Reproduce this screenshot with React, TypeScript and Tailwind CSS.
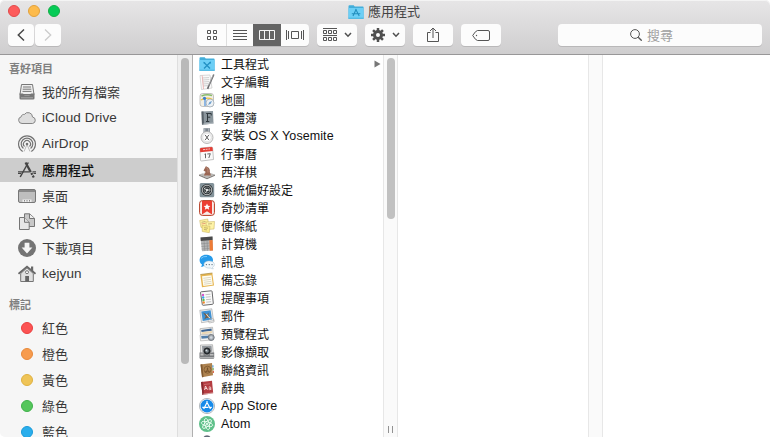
import React from "react";

type Glyph = () => React.ReactElement;

// Latin runs are set a little larger than the ideographs beside them.
function Label({ text, latin }: { text: string; latin: string }) {
  return (
    <span className="whitespace-pre pt-px">
      {text.split(/([\x20-\x7e]+)/).map((part, i) =>
        /^[\x20-\x7e]+$/.test(part) ? (
          <span key={i} className={latin}>{part}</span>
        ) : (
          part
        )
      )}
    </span>
  );
}

/* ---------- sidebar icons, 18px grid ---------- */

const AllFiles: Glyph = () => (
  <>
    <path d="M3.5 1.5h11l1.5 10H2z" fill="#eee" stroke="#777" />
    <path d="M5 4h8M4.7 6.2h8.6M4.5 8.4h9" stroke="#777" />
    <path d="M1.5 10.5H5l1.5 1.7h5l1.5-1.7h3.5v4.7q0 1.3-1.3 1.3H2.8q-1.3 0-1.3-1.3z" fill="#777" />
    <path d="M3 14.8h12" stroke="#aaa" />
  </>
);
const Cloud: Glyph = () => (
  <path d="M4 14.5a3.4 3.4 0 0 1-.8-6.7A2.5 2.5 0 0 1 6.3 5.500 4.500 4.500 0 0 1 14.500 8 3.300 3.300 0 0 1 14.600 14.500z" fill="#dedede" stroke="#858585" />
);
const AirDrop: Glyph = () => (
  <g fill="none" stroke="#747474" strokeWidth="1.2">
    <path d="M4.700 16.400a8.400 8.400 0 1 1 8.600 0" />
    <path d="M5.400 13.500a5.800 5.800 0 1 1 7.200 0" />
    <path d="M6.500 11.500a3.500 3.500 0 1 1 5 0" />
    <path d="m9 9.500-3 7M9 9.500l3 7" strokeWidth=".8" stroke="#aaa" />
    <circle cx="9" cy="9" r="1.300" fill="#747474" stroke="none" />
  </g>
);
const Apps: Glyph = () => (
  <g fill="none" stroke="#454545">
    <path d="M10.300 1.500 2.200 16" strokeWidth="1.500" />
    <path d="m7.500 1.500 8.300 15" strokeWidth="2.200" strokeDasharray="11 1 2 1" />
    <path d="M0 10.800h11.500M14.500 10.800H18" strokeWidth="1.300" />
    <path d="M0 12.500h3M15.500 12.500H18" />
  </g>
);
const Desktop: Glyph = () => (
  <>
    <rect x=".5" y="2.500" width="17" height="13" rx="1.500" fill="#bebebe" stroke="#777" />
    <path d="M1 4h16" stroke="#777" strokeWidth="1.500" />
    <path d="M4.500 12.500h9v2.500h-9z" fill="#eee" />
    <path d="M6.500 13v1.500M9 13v1.500M11.500 13v1.500" stroke="#888" />
  </>
);
const Documents: Glyph = () => (
  <>
    <path d="M6.500.8h5.200l4.800 4.500v8.200h-10z" fill="#c8c8c8" stroke="#757575" />
    <path d="M11.500 1v4.500h5" fill="#eee" stroke="#757575" />
    <path d="M1.500 4.500h5l4.700 4.700v7.300H1.500z" fill="#e6e6e6" stroke="#757575" />
    <path d="M6.500 4.500v4.800h4.700" fill="#ddd" stroke="#757575" />
  </>
);
const Downloads: Glyph = () => (
  <>
    <circle cx="9" cy="9" r="9" fill="#747474" />
    <path d="M6.600 3.700h4.800v4.800h3L9 14.500 3.600 8.500h3z" fill="#f6f6f6" />
  </>
);
const Home: Glyph = () => (
  <>
    <path d="M2.700 8.500v8h12.600v-8L9 2.800z" fill="#e0e0e0" stroke="#757575" />
    <path d="M.5 8.800 9 1.500l8.500 7.300" fill="none" stroke="#686868" strokeWidth="1.700" />
    <path d="M13 1.500h2.200v5L13 4.500z" fill="#686868" />
    <circle cx="9" cy="7.200" r="1.500" fill="#fff" stroke="#777" />
    <path d="M7.200 11h3.800v5.500H7.200z" fill="#666" />
  </>
);

/* ---------- application icons, 16px grid ---------- */

const FolderBase = () => (
  <>
    <path d="M.5 2.200q0-.9.9-.9h4.300l1 1.200h8.100q.8 0 .8.800v11.400H.5z" fill="#43aeda" />
    <path d="M.5 4h15v10.700H.5z" fill="#6dcff6" />
    <path d="M.5 14.200h15" stroke="#4cb5de" />
  </>
);
const AppsFolder: Glyph = () => (
  <>
    <FolderBase />
    <path d="M8.300 5 5 12M7.600 5l3.600 7M3.800 9.700h8.500" fill="none" stroke="#238fbe" strokeWidth="1.100" />
  </>
);
const Utilities: Glyph = () => (
  <>
    <FolderBase />
    <path d="m5 6.500 6 6M11 6.500l-6 6" stroke="#2391c4" strokeWidth="1.300" />
    <path d="m4.300 5.800 2 .6-1.400 1.400zM10.300 6l1.400-.4.400 1.600-1.200.6z" fill="#2391c4" />
  </>
);
const TextEdit: Glyph = () => (
  <>
    <path d="m1 1.500 10-.5 2 13-10.500 1.500z" fill="#fafafa" stroke="#c8c8c8" strokeWidth=".7" />
    <path d="m3 4 7-.4M3.300 6l7-.4M3.500 8l6.500-.4M3.700 10l6-.4M4 12l5-.4" stroke="#bbb" strokeWidth=".7" />
    <path d="M3.200 1.500 4.500 15" stroke="#eaa0a0" strokeWidth=".7" />
    <path d="M14.800.5 9.500 12.500l-.9 2.400" stroke="#68696c" strokeWidth="1.600" fill="none" />
    <path d="M14.200.8 9.600 11.500" stroke="#d4d4d4" strokeWidth=".5" />
  </>
);
const Maps: Glyph = () => (
  <>
    <rect x="1" y="1.500" width="13.500" height="13" rx="2.500" fill="#f2efe5" stroke="#aaa" strokeWidth=".7" />
    <path d="M2.500 4q5-2 10.500-.5" stroke="#87b96b" strokeWidth="1.500" fill="none" />
    <path d="M2 8q6-3.500 11.500-.5" stroke="#f0c33c" strokeWidth="1.300" fill="none" />
    <path d="M6 7v7" stroke="#6da5e3" strokeWidth="1.500" />
    <circle cx="5.500" cy="6.300" r="1.600" fill="#3b7dc9" />
    <circle cx="11" cy="11" r="4" fill="#edf1f4" stroke="#a2acb5" strokeWidth=".8" />
    <path d="m9 13 1.500-3L13 9l-1.300 2.700z" fill="#6d9fce" />
  </>
);
const FontBook: Glyph = () => (
  <>
    <path d="m2.500 1.500 11.500-.5.500 12.500L3 15z" fill="#8a959c" />
    <path d="m2.500 1.500 2-.1.500 13.400-2 .2z" fill="#586168" />
    <path d="m3.500 14.300 11-1.300" stroke="#b8bfc4" />
    <path d="M7.200 3.500h5v2M8.500 3.500v8M7 11.500h3.300M8.500 7.200h2.800" stroke="#2e373c" fill="none" />
  </>
);
const Installer: Glyph = () => (
  <>
    <path d="M4.500.2h6.500v5H4.500z" fill="#7d8790" />
    <path d="M5.800.5v4M9.800 .5v4" stroke="#bfc5ca" />
    <circle cx="8" cy="9.500" r="6" fill="#efefef" stroke="#a8a8a8" strokeWidth=".8" />
    <circle cx="8" cy="9.500" r="4.200" fill="#fff" stroke="#ccc" strokeWidth=".5" />
    <path d="m6.200 7 3.600 5M9.800 7l-3.600 5" stroke="#4d4d4d" strokeWidth=".9" />
  </>
);
const Calendar: Glyph = () => (
  <>
    <path d="M1 3q0-1 1-1l10.500-1q1 0 1.100 1L14.500 13.500 2.500 15q-1 0-1-1z" fill="#fafafa" stroke="#aaa" strokeWidth=".7" />
    <path d="M1 3q0-1 1-1l10.500-1q1 0 1.100 1l.2 3L1.200 6.200z" fill="#e33e35" />
    <path d="m4 3.700 7-.8" stroke="#fff" strokeWidth=".7" strokeDasharray="2 .7" />
    <path d="m5.500 8.300 1-.5v4.400M8.300 8l3-.3-1.500 4.300" stroke="#555" strokeWidth=".9" fill="none" />
  </>
);
const Chess: Glyph = () => (
  <>
    <path d="M0 10.500 8 8l8 2.500L8 14z" fill="#b8b7b4" />
    <path d="m3.500 9.700 3-1 4.500 1.500-3 1.200z" fill="#eee" />
    <path d="m0 10.500 8 3.500 8-3.500v1.200L8 15.200l-8-3.500z" fill="#827e7a" />
    <path d="M5 11.500q0-2 1.800-3.500L4.500 6.500 7 2l.8.7Q11.500 4 10.800 8l1.200 3.500z" fill="#9b6754" />
    <path d="M7.500 3.500Q9.500 5 9 8.500" stroke="#c69682" strokeWidth=".8" fill="none" />
  </>
);
const Preferences: Glyph = () => (
  <>
    <rect x=".7" y=".9" width="14.500" height="14.300" rx="1.500" fill="#84939a" />
    <circle cx="8" cy="8" r="6" fill="#2e3336" />
    <circle cx="8" cy="8" r="4.800" fill="none" stroke="#d0d4d4" strokeWidth=".9" />
    <circle cx="8" cy="8" r="3" fill="none" stroke="#7c8183" strokeWidth=".8" />
    <path d="M8 8 5 6.300M8 8h3.300M8 8l-1.500 3" stroke="#dde0e0" strokeWidth=".9" />
    <circle cx="8" cy="8" r="1.200" fill="#dde0e0" />
  </>
);
const Wunderlist: Glyph = () => (
  <>
    <rect x=".6" y=".6" width="14.800" height="14.800" rx="2.800" fill="#f8ede9" stroke="#b63a21" strokeWidth="1" />
    <path d="M3 1h10v13.500L8 11.300l-5 3.200z" fill="#ec3e32" />
    <path d="m8 3.500 1 2.200 2.400.2-1.800 1.600.6 2.300L8 8.600 5.800 9.800l.6-2.300L4.600 5.900 7 5.700z" fill="#fff" />
  </>
);
const Stickies: Glyph = () => (
  <>
    <path d="m.7 2.500 8-1.500 1.300 7-8 1.500z" fill="#fff1a0" stroke="#cbb768" strokeWidth=".6" />
    <path d="m7 4 8.500-.5-.5 7.500-7.500.5z" fill="#fff4a8" stroke="#cbb768" strokeWidth=".6" />
    <path d="m3 7.500 8 .7-.7 6.500-7-1.200z" fill="#fbeb8b" stroke="#cbb768" strokeWidth=".6" />
    <path d="m2.500 4.300 4-.8M9 6l4-.3M5 9.700l4 .5M5 11.500l3 .4" stroke="#a99b63" strokeWidth=".7" />
    <path d="m2.500 6 4-.7" stroke="#dc7f68" strokeWidth=".7" />
  </>
);
const Calculator: Glyph = () => (
  <>
    <path d="m1.500 1.500 12-1 .5 14-11 .7z" fill="#b4b5b6" />
    <path d="m1.500 1.500 12-1 .1 3.500-11.800 1z" fill="#4a4a4a" />
    <path d="m2 7.800 8.400-.7M2.300 10.600l8.200-.7M2.500 13.100l8.100-.7M5 4.800l.8 10M8 4.500l.6 10.300" stroke="#858687" strokeWidth=".5" />
    <path d="m10.400 4.300 3.200-.3.400 10.500-3.200.2z" fill="#ee7b35" />
  </>
);
const Messages: Glyph = () => (
  <>
    <path d="M6.800.8C3.300.8.600 3.200.6 6.200c0 1.800.9 3.300 2.400 4.300-.1 1.200-.8 1.900-1.300 2.300 1.700.1 3-.6 3.700-1.400 4.700.8 8.600-1.900 8.600-5.400S10.500.8 6.800.8z" fill="#269bea" />
    <path d="M2 4.500Q4 2 8 2.500" stroke="#78c8fa" fill="none" />
    <path d="M10.200 6.900c-3 0-5.300 1.500-5.300 3.600s2.200 3.600 5 3.600c.5 0 1 0 1.400-.1.900.7 2 .9 3.100.8-.6-.4-.9-.9-.9-1.500 1.200-.6 1.900-1.600 1.900-2.800 0-2.100-2.200-3.600-5.200-3.600z" fill="#f1f7fb" stroke="#a5bdcd" strokeWidth=".5" />
    <path d="M7.300 10.600h.1M10.200 10.600h.1M13 10.600h.1" stroke="#536977" strokeWidth="1.200" strokeLinecap="round" />
  </>
);
const Notes: Glyph = () => (
  <>
    <path d="m1.300 2.500 12-1.500L15 13.500l-12 1.700z" fill="#e5b450" />
    <path d="m3 4.300 9.500-1.100 1.300 9.500-9.500 1.200z" fill="#fffdf0" />
    <path d="m4.300 6.300 7.500-1M4.600 8.300l7.500-1M4.900 10.300l7.500-1M5.200 12.200l7.400-1" stroke="#c6c0aa" strokeWidth=".6" />
    <path d="m1.400 2.500 12-1.500" stroke="#a68a42" strokeWidth=".7" />
  </>
);
const Reminders: Glyph = () => (
  <>
    <path d="M1.500 2.500q0-.6.7-.7l10-1q.8 0 .9.700l1.200 11.800q0 .9-.8 1l-9.300 1q-.8 0-.9-.8z" fill="#fafafa" stroke="#59595b" strokeWidth=".9" />
    <path d="m6.500 4.700 5-.5M6.700 7.200l5-.5M7 9.700l5-.5M7.200 12.200l5-.5" stroke="#aaa" strokeWidth=".7" />
    <circle cx="4" cy="5" r="1.200" fill="#d755cd" /><circle cx="4.200" cy="7.500" r="1.200" fill="#35a6ed" />
    <circle cx="4.500" cy="10" r="1.200" fill="#59bf55" /><circle cx="4.700" cy="12.500" r="1.200" fill="#f18a2d" />
  </>
);
const Mail: Glyph = () => (
  <>
    <path d="m.8 2.300 12-1.500 1.700 12-12 1.900z" fill="#eee" stroke="#9a9da0" strokeWidth=".6" />
    <path d="m2.300 3.500 9.300-1.200L13 11.500l-9.300 1.400z" fill="#3d91d4" />
    <path d="M4 4.500 8 6.500l1.500-2v3.500l2.500 2.500-4.300-.7-2.500 1.700 1.500-3.300z" fill="#775c42" />
    <path d="m7.500 6 1.500 2.500 2 1.500" stroke="#f4e9d6" fill="none" />
    <path d="M9 12.800q3-4 6-1.300v2.500l-4.700 1z" fill="none" stroke="#aaa" strokeWidth=".7" />
  </>
);
const Preview: Glyph = () => (
  <>
    <path d="m1 2.700 12.500-1.500 1 8.500-12.500 2z" fill="#f0f0ec" stroke="#9b9b9b" strokeWidth=".6" />
    <path d="m2.200 3.900 10.300-1.300.3 2.200L2.500 6z" fill="#3f6695" />
    <path d="m2.500 6.300 10.400-1.300.2 2-10.300 1.400z" fill="#ead7b5" />
    <path d="m1 9 11-.8.700 5.800-11.100.9z" fill="#f2f2f1" stroke="#aaa" strokeWidth=".6" />
    <path d="m2.200 10 8.500-.5.200 2.500-8.300.7z" fill="#527eaa" />
    <circle cx="12.200" cy="11.500" r="3" fill="#a6acb3" stroke="#737981" />
    <circle cx="12.200" cy="11.500" r="1.300" fill="#d1d8df" />
  </>
);
const ImageCapture: Glyph = () => (
  <>
    <path d="m1.500 1 12-.3 1 9.500h-13z" fill="#e7e7e7" stroke="#999" strokeWidth=".6" />
    <path d="m3 2 9.500-.2.500 6-9.500.5z" fill="#92989e" />
    <path d="M.5 8.500h14.700v5.300q0 1-1 1H1.500q-1 0-1-1z" fill="#787b7e" />
    <path d="M1.500 9.500h3v2h-3zM11 10h3.500v1.500H11z" fill="#bdbdbd" />
    <path d="M1 13.500h14" stroke="#c7c7c7" strokeWidth=".7" />
    <circle cx="8" cy="7" r="4" fill="#24292d" stroke="#adadad" strokeWidth=".7" />
    <circle cx="8" cy="7" r="1.800" fill="#858e95" /><circle cx="7.300" cy="6.300" r=".8" fill="#e3e9ed" />
  </>
);
const Contacts: Glyph = () => (
  <>
    <path d="m1.500 2.500 11.500-1.500 1 12.200L3 15.200z" fill="#ae8350" />
    <path d="m1.500 2.500 1.800-.2 1.200 12.600-1.500.3z" fill="#805a31" />
    <circle cx="8.500" cy="7.700" r="3.500" fill="none" stroke="#765229" strokeWidth=".7" />
    <path d="M6.500 10q2-2 4-.3M8.500 5.500v2.600" stroke="#765229" strokeWidth="1.300" fill="none" />
    <path d="M13.300 3.300h1.200v2.300h-1.200z" fill="#4b9cd4" /><path d="M13.500 6h1.200v2.300h-1.200z" fill="#72a958" />
    <path d="M13.700 8.800h1.200v2.300h-1.200z" fill="#d65c3f" />
  </>
);
const Dictionary: Glyph = () => (
  <>
    <path d="m2 2 11-1.200 1.200 12.400L3.500 15z" fill="#b43c41" />
    <path d="m2 2 1.700-.2 1.300 13-1.500.2z" fill="#85292f" />
    <path d="m4 14.300 10-1.400" stroke="#e7d3cf" strokeWidth=".7" />
    <path d="m5.500 10 1-4 2 3.800M6 8.700l2-.3" stroke="#fff0ed" strokeWidth=".8" fill="none" />
    <path d="M9.700 7.200q2-1 2 .4l.2 2.200m-.2-1.700q-2 0-1.900 1 .3 1.200 2 .3" stroke="#fff0ed" strokeWidth=".7" fill="none" />
    <path d="m5 4.500 6-.7" stroke="#d78a88" strokeWidth=".6" />
  </>
);
const AppStore: Glyph = () => (
  <>
    <circle cx="8" cy="8" r="7.600" fill="#f2f4f6" stroke="#a2aab0" strokeWidth=".8" />
    <circle cx="8" cy="8" r="6.500" fill="#168ae9" />
    <path d="M8.500 3.500 4.700 11M7.500 3.500 11.500 11M3.300 9.300h6.200M11.300 9.300h1.500" stroke="#fff" strokeWidth="1.200" fill="none" />
  </>
);
const Atom: Glyph = () => (
  <>
    <circle cx="8" cy="8" r="8" fill="#5fc08a" />
    <g fill="none" stroke="#f0fff5" strokeWidth=".9">
      <ellipse cx="8" cy="8" rx="5.800" ry="2.200" transform="rotate(15 8 8)" />
      <ellipse cx="8" cy="8" rx="5.800" ry="2.200" transform="rotate(75 8 8)" />
      <ellipse cx="8" cy="8" rx="5.800" ry="2.200" transform="rotate(135 8 8)" />
    </g>
    <circle cx="8" cy="8" r="1" fill="#fff" />
  </>
);
const Automator: Glyph = () => (
  <>
    <path d="M4.500 5q0-3.500 3.500-3.500t3.500 3.500v8h-7z" fill="#d3d5da" stroke="#7e828c" strokeWidth=".8" />
    <path d="M5.500 3h5" stroke="#414a5c" strokeWidth="1.500" />
  </>
);

const favourites: [string, Glyph][] = [
  ["我的所有檔案", AllFiles],
  ["iCloud Drive", Cloud],
  ["AirDrop", AirDrop],
  ["應用程式", Apps],
  ["桌面", Desktop],
  ["文件", Documents],
  ["下載項目", Downloads],
  ["kejyun", Home],
];

const tags = [
  { name: "紅色", dot: "bg-[#fc5353] border-[#ea3f3f]" },
  { name: "橙色", dot: "bg-[#f79b4d] border-[#e8893a]" },
  { name: "黃色", dot: "bg-[#efc457] border-[#dfb141]" },
  { name: "綠色", dot: "bg-[#55c65c] border-[#3fb14a]" },
  { name: "藍色", dot: "bg-[#2aaeec] border-[#1999d8]" },
];

const files: [string, Glyph][] = [
  ["工具程式", Utilities],
  ["文字編輯", TextEdit],
  ["地圖", Maps],
  ["字體簿", FontBook],
  ["安裝 OS X Yosemite", Installer],
  ["行事曆", Calendar],
  ["西洋棋", Chess],
  ["系統偏好設定", Preferences],
  ["奇妙清單", Wunderlist],
  ["便條紙", Stickies],
  ["計算機", Calculator],
  ["訊息", Messages],
  ["備忘錄", Notes],
  ["提醒事項", Reminders],
  ["郵件", Mail],
  ["預覽程式", Preview],
  ["影像擷取", ImageCapture],
  ["聯絡資訊", Contacts],
  ["辭典", Dictionary],
  ["App Store", AppStore],
  ["Atom", Atom],
  ["", Automator],
];

const button =
  "flex h-[22px] items-center justify-center rounded-[4px] bg-[#fcfcfc] shadow-[0_1px_0_#b9b8b9]";

function Chevron() {
  return (
    <svg width="8" height="6" viewBox="0 0 8 6" fill="none" stroke="#505050" strokeWidth="1.5">
      <path d="m1 1 3 3.200L7 1" />
    </svg>
  );
}

function Toolbar() {
  return (
    <header className="h-[55px] shrink-0 rounded-t-[5px] border-b border-[#989798] bg-linear-to-b from-[#e7e6e7] to-[#cfcecf] shadow-[inset_0_1px_0_#f4f4f4]">
      <div className="grid h-6 grid-cols-[1fr_auto_1fr] items-center pl-2 pr-[10px]">
        <div className="flex gap-2 -mt-0.5">
          <span className="size-3 rounded-full border border-[#e2494a] bg-[#fd5b5b]" />
          <span className="size-3 rounded-full border border-[#e2a13c] bg-[#fdbb4c]" />
          <span className="size-3 rounded-full border border-[#14ae46] bg-[#05cb56]" />
        </div>
        <div className="flex items-center gap-1 text-[13px] leading-6 text-[#444]">
          <svg className="-mt-px" width="16" height="16" viewBox="0 0 16 16"><AppsFolder /></svg>
          應用程式
        </div>
      </div>
      <div className="flex pl-2">
        <div className="flex gap-px">
          <div className={`${button} w-[26px]`}>
            <svg width="8" height="14" viewBox="0 0 8 14" fill="none" stroke="#484848" strokeWidth="1.5"><path d="M7 1.500 1.300 7 7 12.500" /></svg>
          </div>
          <div className={`${button} w-[26px]`}>
            <svg width="8" height="14" viewBox="0 0 8 14" fill="none" stroke="#cbcbcb" strokeWidth="1.300"><path d="m1 1.500 5.700 5.500L1 12.500" /></svg>
          </div>
        </div>
        <div className={`${button} ml-[136px] w-28 overflow-hidden`}>
          <div className="flex h-full w-[30px] items-center justify-center border-r border-[#dedede]">
            <svg width="10" height="10" viewBox="0 0 10 10" fill="none" stroke="#555"><path d="M.5.5h3v3h-3zM6.500.5h3v3h-3zM.5 6.500h3v3h-3zM6.500 6.500h3v3h-3z" /></svg>
          </div>
          <div className="flex h-full w-[26px] items-center justify-center">
            <svg width="14" height="10" viewBox="0 0 14 10" stroke="#555"><path d="M0 .5h14M0 3.500h14M0 6.500h14M0 9.500h14" /></svg>
          </div>
          <div className="flex h-full w-7 items-center justify-center bg-[#646464]">
            <svg width="16" height="10" viewBox="0 0 16 10" fill="none" stroke="#f6f6f6"><path d="M.5.5h15v9H.5zM5.500.5v9M10.500.5v9" /></svg>
          </div>
          <div className="flex h-full w-7 items-center justify-center">
            <svg width="18" height="10" viewBox="0 0 18 10" fill="none" stroke="#555"><path d="M.5 0v10M2.500 1v8M15.500 1v8M17.500 0v10M5.500 1.500h7v7h-7z" /></svg>
          </div>
        </div>
        <div className={`${button} ml-2 w-10 gap-[7px]`}>
          <svg width="14" height="14" viewBox="0 0 14 14" fill="none" stroke="#555"><path d="M0 .5h14M0 7.500h14M.5 2.500h3v3h-3zM5.500 2.500h3v3h-3zM10.500 2.500h3v3h-3zM.5 9.500h3v3h-3zM5.500 9.500h3v3h-3zM10.500 9.500h3v3h-3z" /></svg>
          <Chevron />
        </div>
        <div className={`${button} ml-2 w-10 gap-[7px]`}>
          <svg width="14" height="14" viewBox="0 0 14 14" fill="none" stroke="#505050">
            <circle cx="7" cy="7" r="3.500" strokeWidth="3" />
            <path d="M7 0v3M7 11v3M0 7h3M11 7h3M2.050 2.050l2 2M9.950 9.950l2 2M11.950 2.050l-2 2M4.050 9.950l-2 2" strokeWidth="2.500" />
          </svg>
          <Chevron />
        </div>
        <div className={`${button} ml-2 w-10`}>
          <svg className="-mt-px" width="12" height="16" viewBox="0 0 12 16" fill="none" stroke="#555"><path d="M3.500 5.500h-3v9h11v-9h-3M6 11V1M3 4l3-3 3 3" /></svg>
        </div>
        <div className={`${button} ml-2 w-10`}>
          <svg width="18" height="11" viewBox="0 0 18 11" fill="none" stroke="#555"><path d="M5.500.5H16q1.500 0 1.500 1.500v7q0 1.500-1.500 1.500H5.500Q3.800 10.500.7 5.500 3.800.5 5.500.5z" /><circle cx="4.500" cy="5.500" r=".7" fill="#555" stroke="none" /></svg>
        </div>
        <div className={`${button} ml-[57px] w-[204px] gap-[5px] pr-[17px] text-[13px] text-[#a0a0a0]`}>
          <svg width="12" height="12" viewBox="0 0 12 12" fill="none" stroke="#555"><circle cx="5" cy="5" r="4.400" /><path d="m8.200 8.200 3.500 3.500" strokeWidth="1.300" /></svg>
          <span className="pt-px">搜尋</span>
        </div>
      </div>
    </header>
  );
}

const heading = "pl-[9px] text-[11px] font-semibold leading-[18px] text-[#808080]";

function Sidebar() {
  return (
    <nav className="w-[177px] shrink-0 overflow-hidden rounded-bl-[5px] bg-[#f6f6f6] pt-[5px] text-[13px] text-[#383838]">
      <h2 className={heading}>喜好項目</h2>
      <ul className="pt-px">
        {favourites.map(([name, Icon]) => (
          <li key={name} className="py-px">
            <div className={`flex h-6 items-center gap-[6px] pl-[18px] ${name === "應用程式" ? "bg-[#cdcdcd] font-medium text-[#111]" : ""}`}>
              <svg width="18" height="18" viewBox="0 0 18 18" fill="none" className="shrink-0"><Icon /></svg>
              <Label text={name} latin="text-[13.5px] tracking-[0.12px]" />
            </div>
          </li>
        ))}
      </ul>
      <h2 className={`${heading} mt-[9px]`}>標記</h2>
      <ul className="pt-px">
        {tags.map((tag) => (
          <li key={tag.name} className="flex h-[26px] items-center gap-[9px] pl-[21px]">
            <span className={`size-3 rounded-full border ${tag.dot}`} />
            <span className="pt-px">{tag.name}</span>
          </li>
        ))}
      </ul>
    </nav>
  );
}

function ColumnTrack({ children }: { children?: React.ReactNode }) {
  return (
    <div className="flex w-[15px] shrink-0 flex-col items-center border-x border-[#e7e7e7] bg-[#fafafa] pt-[3px]">
      {children}
    </div>
  );
}

export default function App() {
  return (
    <div className="flex h-[437px] w-[770px] flex-col overflow-hidden bg-white font-['Liberation_Sans','Noto_Sans_CJK_TC',sans-serif]">
      <Toolbar />
      <main className="flex min-h-0 flex-1">
        <Sidebar />
        <div className="flex w-4 shrink-0 justify-center border-l border-r border-l-[#dedede] border-r-[#b0b0b0] bg-[#efefef] pt-[3px]">
          <span className="h-[306px] w-2 rounded-full bg-[#b9b9b9]" />
        </div>
        <ul className="w-[190px] shrink-0 overflow-hidden text-[12px] text-[#111]">
          {files.map(([name, Icon], i) => (
            <li key={i} className="flex h-[18px] items-center pl-[6px] pr-[2px]">
              <svg width="16" height="16" viewBox="0 0 16 16" fill="none" className="mr-[6px] shrink-0"><Icon /></svg>
              <Label text={name} latin="text-[12.5px] tracking-[0.08px]" />
              {i === 0 && (
                <svg className="ml-auto" width="7" height="8" viewBox="0 0 7 8"><path d="M.5.5 6.500 4 .5 7.500z" fill="#777" /></svg>
              )}
            </li>
          ))}
        </ul>
        <ColumnTrack>
          <span className="h-[161px] w-2 rounded-full bg-[#c1c1c1]" />
          <span className="mb-[4px] mt-auto h-[7px] w-[5px] border-x border-[#929292]" />
        </ColumnTrack>
        <div className="w-[190px] shrink-0" />
        <ColumnTrack />
      </main>
    </div>
  );
}
